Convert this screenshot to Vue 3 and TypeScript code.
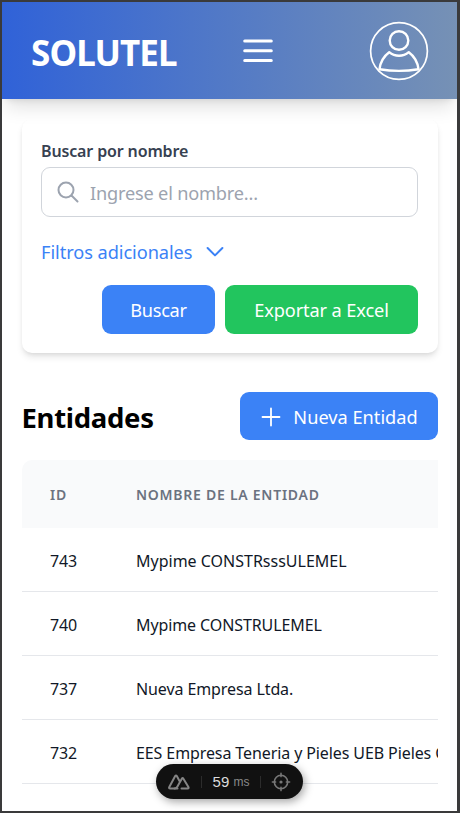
<script setup lang="ts">
interface Entity {
  id: number
  name: string
}

const entities: Entity[] = [
  { id: 743, name: 'Mypime CONSTRsssULEMEL' },
  { id: 740, name: 'Mypime CONSTRULEMEL' },
  { id: 737, name: 'Nueva Empresa Ltda.' },
  { id: 732, name: 'EES Empresa Teneria y Pieles UEB Pieles Caribe' },
  { id: 731, name: 'Comercial Rosa Mabel de Sevilla del sol' },
]
</script>

<template>
  <div class="screen">
    <header class="topbar">
      <span class="brand">SOLUTEL</span>
      <svg class="menu" viewBox="0 0 30 24" fill="none" stroke="#fff" stroke-width="3" stroke-linecap="round">
        <path d="M1.7 2H28.3M1.7 11.7H28.3M1.7 21.4H28.3" />
      </svg>
      <svg class="avatar" viewBox="0 0 60 60" fill="none" stroke="#fff" stroke-linejoin="round">
        <circle cx="30" cy="30" r="28.4" stroke-width="1.7" />
        <circle cx="30" cy="19.5" r="9.3" stroke-width="2.4" />
        <path d="M20.2 31.2C14.8 35.2 11.3 41.5 10.5 48.2C23 50.4 37 50.4 49.5 48.2C48.7 41.5 45.2 35.2 39.8 31.2C34 36 26 36 20.2 31.2Z" stroke-width="2.4" />
      </svg>
    </header>

    <main class="content">
      <section class="card">
        <label class="label" for="name">Buscar por nombre</label>
        <div class="field">
          <svg class="search" viewBox="0 0 24 24" fill="none" stroke="#9ca3af" stroke-width="2" stroke-linecap="round">
            <circle cx="10" cy="10" r="7.5" />
            <path d="M15.5 15.5L21.5 21.5" />
          </svg>
          <input id="name" type="text" placeholder="Ingrese el nombre..." />
        </div>
        <div class="filters">
          <span>Filtros adicionales</span>
          <svg class="chevron" viewBox="0 0 18 12" fill="none" stroke="#3b82f6" stroke-width="2" stroke-linecap="round" stroke-linejoin="round">
            <path d="M1.6 2L9 9.4L16.4 2" />
          </svg>
        </div>
        <div class="actions">
          <button class="btn find"><span>Buscar</span></button>
          <button class="btn export"><span>Exportar a Excel</span></button>
        </div>
      </section>

      <div class="heading">
        <h1>Entidades</h1>
        <button class="btn create">
          <svg class="plus" viewBox="0 0 20 20" fill="none" stroke="#fff" stroke-width="1.8" stroke-linecap="round">
            <path d="M10 1.5V18.5M1.5 10H18.5" />
          </svg>
          <span>Nueva Entidad</span>
        </button>
      </div>

      <div class="table">
        <div class="row head">
          <span class="id">ID</span>
          <span class="name">NOMBRE DE LA ENTIDAD</span>
        </div>
        <div v-for="entity in entities" :key="entity.id" class="row">
          <span class="id">{{ entity.id }}</span>
          <span class="name">{{ entity.name }}</span>
        </div>
      </div>
    </main>

    <div class="devtools">
      <svg class="nuxt" viewBox="0 0 24 18" fill="none" stroke="#858585" stroke-width="2" stroke-linejoin="round" stroke-linecap="round">
        <path d="M10.5 15.5H3.2Q1.4 15.5 2.3 13.9L8.2 3.1Q9 1.8 9.8 3.1L12.5 8" />
        <path d="M14.5 15.5H20.6Q22.2 15.5 21.4 14L16.4 5.7Q15.6 4.4 14.8 5.7L10.3 13.7Q9.3 15.5 7.5 15.5" />
      </svg>
      <i></i>
      <span class="time">59 <small>ms</small></span>
      <i></i>
      <svg class="target" viewBox="0 0 20 20" fill="none" stroke="#777" stroke-width="1.6" stroke-linecap="round">
        <circle cx="10" cy="10" r="6.7" />
        <circle cx="10" cy="10" r="0.8" fill="#777" />
        <path d="M10 1.4V4.6M10 15.4V18.6M1.4 10H4.6M15.4 10H18.6" />
      </svg>
    </div>
  </div>
</template>

<style>
body {
  background: #fff;
}
</style>

<style scoped>
* {
  box-sizing: border-box;
}
.screen {
  position: relative;
  width: 460px;
  height: 813px;
  overflow: hidden;
  border: 2px solid #3a3a3b;
  border-right-width: 3px;
  background: #fff;
  font-family: 'Noto Sans', sans-serif;
}
.topbar {
  height: 97px;
  padding: 0 28px 0 29px;
  display: flex;
  align-items: center;
  background: linear-gradient(to right, #3062d8, #537ac6 50%, #7691b5);
  box-shadow: 0 12px 18px -4px rgba(0, 0, 0, 0.12), 0 5px 7px -5px rgba(0, 0, 0, 0.12);
}
.brand {
  width: 146px;
  margin-top: 4px;
  color: #fff;
  font-size: 35px;
  font-weight: 700;
  letter-spacing: -0.9px;
  white-space: nowrap;
}
.menu {
  width: 30px;
  height: 24px;
  margin-left: 66px;
}
.avatar {
  width: 60px;
  height: 60px;
  margin-left: auto;
}
.content {
  padding: 20px 19.5px 0;
}
.card {
  height: 234px;
  padding: 20px 19.5px 0;
  border-radius: 10px;
  box-shadow: 0 5px 7px -1px rgba(0, 0, 0, 0.1), 0 2px 5px -2px rgba(0, 0, 0, 0.1);
}
.label {
  display: flex;
  align-items: center;
  height: 24px;
  color: #374151;
  font-size: 16px;
  font-weight: 600;
  letter-spacing: -0.14px;
  white-space: nowrap;
}
.field {
  display: flex;
  align-items: center;
  height: 50px;
  margin-top: 4px;
  padding-left: 14px;
  border: 1px solid #d1d5db;
  border-radius: 9px;
}
.search {
  width: 24px;
  height: 24px;
  flex: none;
}
input {
  min-width: 0;
  flex: 1;
  margin-left: 10px;
  padding: 2px 0 0;
  border: 0;
  outline: 0;
  background: transparent;
  font-family: inherit;
  font-size: 18.2px;
  letter-spacing: -0.2px;
}
input::placeholder {
  color: #9ca3af;
  opacity: 1;
}
.filters {
  display: flex;
  align-items: center;
  height: 24px;
  margin-top: 23px;
  color: #3b82f6;
  font-size: 18.2px;
  letter-spacing: -0.06px;
  white-space: nowrap;
}
.chevron {
  width: 18px;
  height: 12px;
  margin-left: 14px;
}
.actions {
  display: flex;
  justify-content: flex-end;
  gap: 10px;
  margin-top: 21px;
}
.btn {
  display: flex;
  align-items: center;
  justify-content: center;
  height: 48.5px;
  padding: 2px 0 0;
  border: 0;
  border-radius: 9px;
  background: #3b82f6;
  color: #fff;
  font-family: inherit;
  font-size: 18.2px;
  white-space: nowrap;
}
.find {
  width: 113px;
  letter-spacing: -0.3px;
}
.export {
  width: 193px;
  background: #22c55e;
  letter-spacing: -0.12px;
}
.create {
  width: 198px;
  padding-left: 2px;
  gap: 12px;
}
.plus {
  width: 20px;
  height: 20px;
  margin-top: -1px;
}
.heading {
  display: flex;
  align-items: center;
  justify-content: space-between;
  height: 48px;
  margin-top: 39px;
}
h1 {
  margin: 4px 0 0;
  color: #000;
  font-size: 27.5px;
  font-weight: 700;
  line-height: 36px;
  letter-spacing: -0.3px;
}
.table {
  margin-top: 20px;
  overflow: hidden;
  border-radius: 10px 0 0 0;
}
.row {
  display: flex;
  align-items: center;
  height: 64px;
  padding: 2px 0 0 28.5px;
  border-bottom: 1px solid #e5e7eb;
  color: #111827;
  font-size: 16px;
  letter-spacing: -0.1px;
  white-space: nowrap;
}
.row:last-child {
  padding-top: 4px;
}
.row:nth-child(2) .name {
  letter-spacing: 0;
}
.head {
  height: 68px;
  padding-top: 0;
  border-bottom: 0;
  background: #f9fafb;
  color: #6b7280;
  font-size: 14px;
  font-weight: 600;
  letter-spacing: 0.74px;
}
.id {
  width: 86px;
  flex: none;
}
.devtools {
  position: absolute;
  left: 154px;
  top: 762px;
  width: 147px;
  height: 35px;
  padding: 0 12px 0 11px;
  display: flex;
  align-items: center;
  justify-content: space-between;
  border-radius: 18px;
  background: #111;
  box-shadow: 2px 3px 9px rgba(0, 0, 0, 0.35);
  font-family: 'Liberation Sans', sans-serif;
}
.devtools i {
  width: 1px;
  height: 12px;
  background: #2c2c2c;
}
.nuxt {
  width: 24px;
  height: 18px;
}
.target {
  width: 20px;
  height: 20px;
}
.time {
  color: #dcdcdc;
  font-size: 15px;
}
.time small {
  position: relative;
  top: -1px;
  color: #8a8a8a;
  font-size: 12px;
}
</style>
